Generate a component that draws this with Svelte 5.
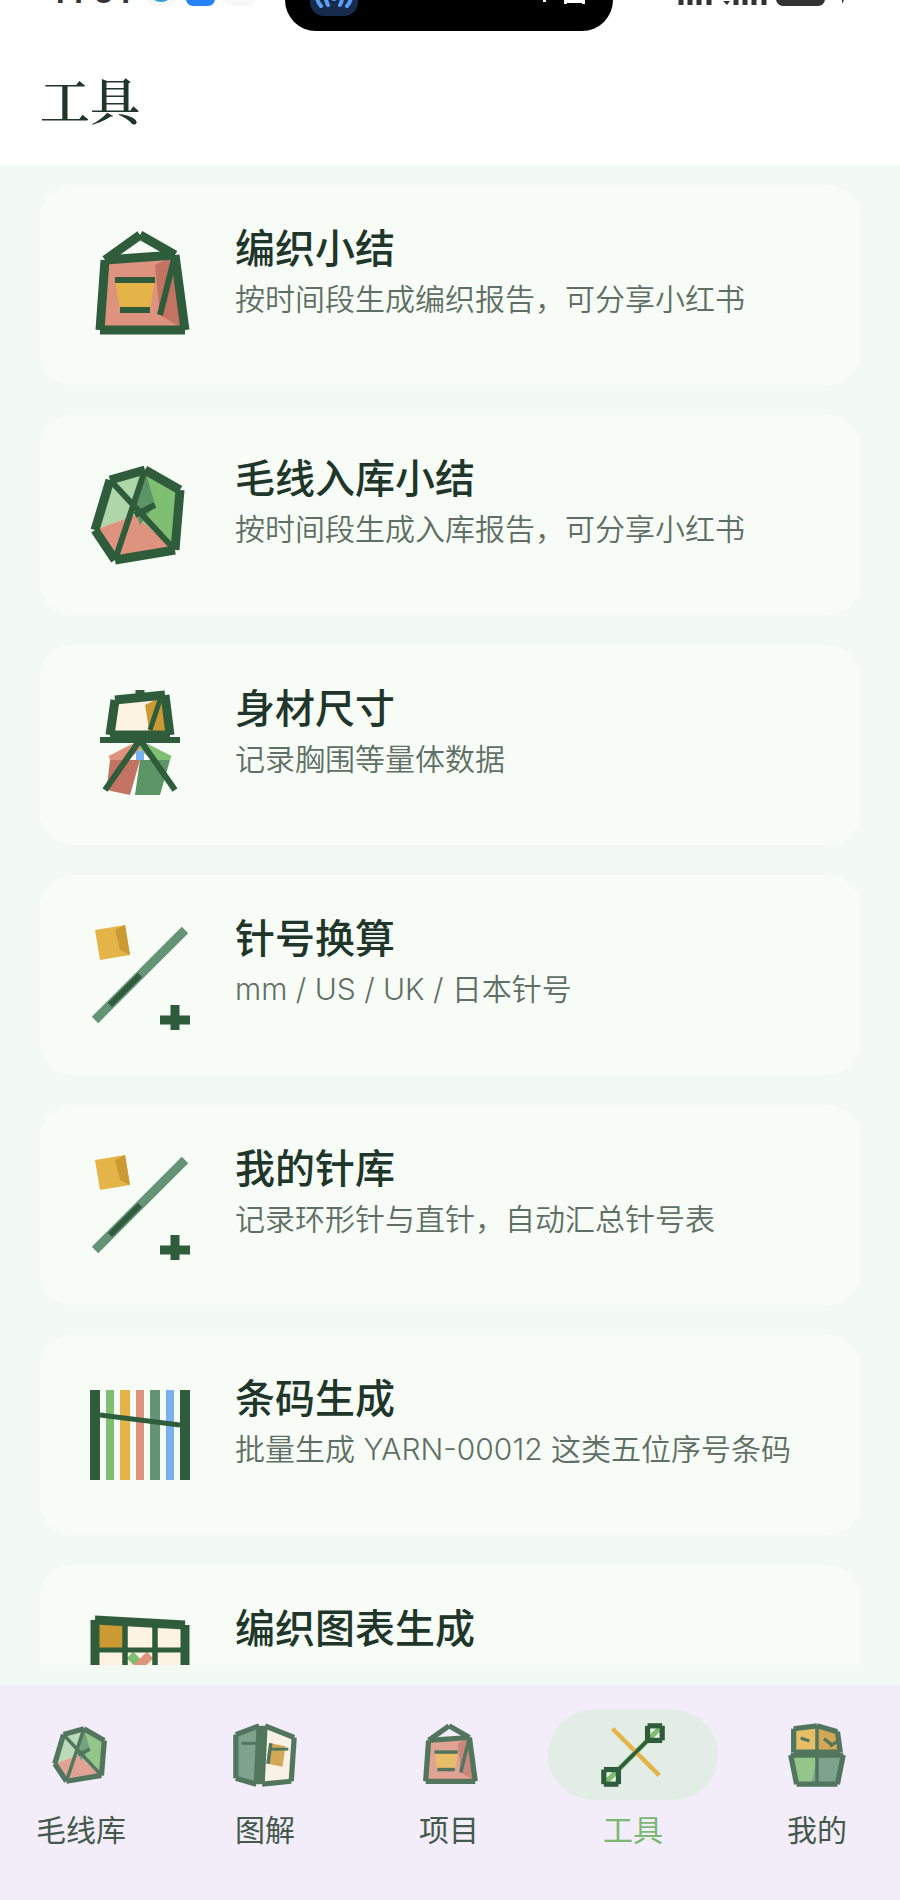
<script>
  const tools = [
    { icon: 'bag', title: '编织小结', desc: '按时间段生成编织报告，可分享小红书' },
    { icon: 'yarn', title: '毛线入库小结', desc: '按时间段生成入库报告，可分享小红书' },
    { icon: 'easel', title: '身材尺寸', desc: '记录胸围等量体数据' },
    { icon: 'needle', title: '针号换算', desc: 'mm / US / UK / 日本针号' },
    { icon: 'needle', title: '我的针库', desc: '记录环形针与直针，自动汇总针号表' },
    { icon: 'barcode', title: '条码生成', desc: '批量生成 YARN-00012 这类五位序号条码' },
    { icon: 'chart', title: '编织图表生成', desc: '' },
  ];

  const tabs = [
    { icon: 'yarn', label: '毛线库' },
    { icon: 'book', label: '图解' },
    { icon: 'bag', label: '项目' },
    { icon: 'tools', label: '工具' },
    { icon: 'basket', label: '我的' },
  ];

  let active = $state('工具');

  const dark = '#2f5d3c';
  const green = '#7fbf72';
  const moss = '#5c9465';
  const mint = '#afd6a9';
  const sage = '#659375';
  const pink = '#dd937d';
  const rust = '#c27362';
  const gold = '#e5b448';
  const ochre = '#cc9a33';
  const cream = '#fcf3e3';
  const blue = '#78b0f0';

  // every icon is drawn on a 24 x 24 grid, in paint order
  // f: filled polygon, s: single stroke [x1, y1, x2, y2]
  const f = (points, color) => ({ points, color });
  const s = (line, w = 1.8, color = dark) => ({ line, w, color });

  // closed outline made of separate butt-capped strokes
  function outline(pts, w = 1.8) {
    return pts.map((p, i) => s([...p, ...pts[(i + 1) % pts.length]], w));
  }

  const icons = {
    bag: [
      f('5,7 19,6 21,21 4,21', pink),
      f('15,8 19,6 21,21 16,18', rust),
      f('7,11 15,11 14,17 8,17', gold),
      ...outline([[5, 7], [19, 6], [21, 21], [4, 21]]),
      s([5, 7, 12, 2]),
      s([12, 2, 19, 6]),
      s([7, 11, 15, 11], 1.2),
      s([8, 17, 14, 17], 1.2),
      s([19, 6, 16, 18], 1.2),
    ],
    yarn: [
      f('6,5 13,3 11,12 3,15', mint),
      f('3,15 11,12 19,19 7,21', pink),
      f('13,3 20,7 19,19 11,12', green),
      f('13,3 15,10 12,14 11,11', moss),
      ...outline([[6, 5], [13, 3], [20, 7], [19, 19], [7, 21], [3, 15]]),
      s([6, 5, 19, 19], 1.2),
      s([13, 3, 7, 21], 1.2),
      s([11, 12, 15, 10], 1.2),
    ],
    easel: [
      f('9.5,15 12,13 14.5,15', '#fff'),
      f('12,11 5.7,14.2 6,15 9.5,15 12,13', pink),
      f('12,11 18.3,14.2 18,15 14.5,15 12,13', green),
      f('11.2,13.2 12.8,13.2 12.8,15 11.2,15', blue),
      f('6,15 12,15 10,22 5.3,21', rust),
      f('12,15 18,15 16,22 11,22', moss),
      f('7,3 17,2 18,10 6,10', cream),
      f('13,4 17,2 17,10 14,10', ochre),
      ...outline([[7, 3], [17, 2], [18, 10], [6, 10]]),
      s([12, 1, 12, 3]),
      s([4, 11, 20, 11], 1.2),
      s([16, 3, 14, 9], 1),
      s([12, 11, 5, 21], 1.2),
      s([12, 11, 19, 21], 1.2),
    ],
    needle: [
      f('3,3 9,2 10,8 4,9', gold),
      f('7,3 9,2 10,8 8,7', ochre),
      s([3, 21, 21, 3], 1.8, sage),
      s([6, 18, 12, 12], 1.2),
      s([16, 21, 22, 21]),
      s([19, 18, 19, 23]),
    ],
    barcode: [
      s([3, 3, 3, 21], 2),
      s([6, 3, 6, 21], 1.6, green),
      s([9, 3, 9, 21], 2, gold),
      s([12, 3, 12, 21], 1.6, pink),
      s([15, 3, 15, 21], 2, sage),
      s([18, 3, 18, 21], 1.6, blue),
      s([21, 3, 21, 21], 2),
      s([4, 8, 20, 10], 1),
    ],
    chart: [
      f('3,3 21,4 21,21 3,21', cream),
      f('3,3 9,3 9,9 3,9', ochre),
      s([10, 10, 12.6, 12.6], 1.8, green),
      s([14, 10, 11.4, 12.6], 1.8, pink),
      ...outline([[3, 3], [21, 4], [21, 21], [3, 21]]),
      s([9, 3, 9, 21], 1.1),
      s([15, 3, 15, 21], 1.1),
      s([3, 9, 21, 9], 1),
      s([3, 15, 21, 15], 1),
    ],
    book: [
      f('2,5 10,2 9,22 2,20', sage),
      f('12,2 22,6 21,21 11,22', cream),
      f('14,8 19,9 18,16 13,15', ochre),
      ...outline([[2, 5], [10, 2], [9, 22], [2, 20]]),
      ...outline([[12, 2], [22, 6], [21, 21], [11, 22]]),
      s([11, 2, 10, 22], 1),
      s([4, 8, 9, 8], 1),
      s([14, 8, 13, 15], 1.2),
      s([14, 10, 20, 10], 1),
    ],
    tools: [
      f('2,17 7,17 7,22 2,22', '#eef8ec'),
      f('17,2 22,2 22,7 17,7', '#eef8ec'),
      s([3, 21, 21, 3], 1.8, green),
      s([5, 3, 21, 19], 1.5, gold),
      s([7, 17, 17, 7], 1.2),
      ...outline([[2, 17], [7, 17], [7, 22], [2, 22]]),
      ...outline([[17, 2], [22, 2], [22, 7], [17, 7]]),
    ],
    basket: [
      f('4,3 12,2 12,11 4,11', gold),
      f('12,2 19,4 20,11 12,11', ochre),
      f('3,12 12,12 10,22 5,22', green),
      f('12,12 21,12 19,22 10,22', sage),
      ...outline([[4, 3], [12, 2], [19, 4], [20, 11], [4, 11]]),
      ...outline([[3, 12], [21, 12], [19, 22], [5, 22]]),
      s([12, 2, 12, 22], 1.2),
      s([6.4, 6.2, 9.4, 7.2], 1.1),
      s([14.4, 6.4, 17.4, 8.7], 1.1),
      s([16.5, 9, 19, 7.3], 1.1),
    ],
  };
</script>

{#snippet glyph(name)}
  <svg viewBox="0 0 24 24" aria-hidden="true">
    {#each icons[name] as shape}
      {#if shape.points}
        <polygon points={shape.points} fill={shape.color} />
      {:else}
        <line
          x1={shape.line[0]}
          y1={shape.line[1]}
          x2={shape.line[2]}
          y2={shape.line[3]}
          stroke={shape.color}
          stroke-width={shape.w}
        />
      {/if}
    {/each}
  </svg>
{/snippet}

<div class="screen">
  <header>
    <div class="status">
      <div class="side">
        <div class="clock"><span>11</span><span>34</span></div>
        <svg class="chips" viewBox="0 0 110 8" aria-hidden="true">
          <rect x="0" y="-24" width="30" height="30" rx="8" fill="#f8f8f8" />
          <circle cx="15" cy="-11" r="13" fill="#2d9fd0" />
          <rect x="40" y="-24" width="29" height="30" rx="7" fill="#2483fb" />
          <rect x="79" y="-24" width="30" height="30" rx="7" fill="#f8f8f8" />
        </svg>
      </div>
      <div class="island">
        <svg viewBox="0 0 328 31" aria-hidden="true">
          <rect x="25" y="-32" width="48" height="48" rx="14" fill="#172b4d" />
          <g fill="none" stroke="#5a9ff5" stroke-width="4" stroke-linecap="round">
            <path d="M32 -2Q33 3 36 6M41 -3Q41 2 43 5" />
            <path d="M66 -2Q65 3 62 6M57 -3Q57 2 55 5" />
          </g>
          <circle cx="49" cy="-2" r="3" fill="#5a9ff5" />
          <path d="M258 -4h3v6h-3zM279 -4h3v8h-3zM297 -4h3v8h-3zM279 0h21v3h-21z" fill="#fff" />
        </svg>
      </div>
      <div class="side end">
        <svg class="signals" viewBox="0 0 170 8" aria-hidden="true">
          <path
            d="M3 -4v9M12 -4v9M21 -4v9M31 -4v9M58 -4v9M67 -4v9M76 -4v9M86 -4v9"
            stroke="#333"
            stroke-width="5"
          />
          <path d="M45 1h7l-3 4z" fill="#333" />
          <rect x="98" y="-18" width="49" height="24" rx="7" fill="#333" />
          <path d="M164 -2h3l-3 6z" fill="#333" />
        </svg>
      </div>
    </div>
    <h1>工具</h1>
  </header>

  <main>
    <div class="list">
      {#each tools as tool}
        <a class="card" href="#{tool.icon}">
          {@render glyph(tool.icon)}
          <div class="text">
            <h2>{tool.title}</h2>
            <p>{tool.desc}</p>
          </div>
        </a>
      {/each}
    </div>
  </main>

  <nav>
    <div class="tabs">
      {#each tabs as tab}
        <button class:active={active === tab.label} onclick={() => (active = tab.label)}>
          <span class="pill">{@render glyph(tab.icon)}</span>
          {tab.label}
        </button>
      {/each}
    </div>
  </nav>
</div>

<style>
  :global(body) {
    margin: 0;
  }

  .screen {
    height: 100vh;
    display: flex;
    flex-direction: column;
    background: #f3faf4;
    color: #21362a;
    font-family: "Noto Sans CJK SC", "Noto Sans", sans-serif;
  }

  header {
    flex: none;
    background: #fff;
    padding-bottom: 32px;
  }

  .status {
    display: flex;
    justify-content: space-between;
    height: 31px;
    overflow: hidden;
  }

  .side {
    flex: 1;
    box-sizing: border-box;
    display: flex;
    align-items: flex-start;
    padding-left: 50px;
  }

  .side.end {
    justify-content: flex-end;
    padding: 0 52px 0 0;
  }

  .clock {
    flex: none;
    display: flex;
    gap: 8px;
    width: 96px;
    margin-top: -32px;
    font: 700 32px/48px Roboto, sans-serif;
    color: #333;
  }

  .chips {
    flex: none;
    width: 110px;
    height: 8px;
  }

  .signals {
    flex: none;
    width: 170px;
    height: 8px;
  }

  .island {
    flex: none;
    width: 328px;
    height: 31px;
    background: #000;
    border-radius: 0 0 40px 40px;
  }

  .island svg {
    display: block;
  }

  h1 {
    margin: 32px 40px 0;
    font: 600 50px/70px "Noto Serif CJK SC", "Noto Sans CJK SC", serif;
  }

  main {
    flex: 1;
    min-height: 0;
    padding: 20px 40px;
    display: flex;
  }

  .list {
    flex: 1;
    display: flex;
    flex-direction: column;
    gap: 30px;
    overflow: hidden;
  }

  .card {
    flex: none;
    display: flex;
    gap: 35px;
    padding: 40px;
    border-radius: 32px;
    background: #f7fcf6;
    color: inherit;
    text-decoration: none;
  }

  .card svg {
    flex: none;
    width: 120px;
    height: 120px;
  }

  h2 {
    margin: 0;
    font-size: 40px;
    font-weight: 500;
    line-height: 42px;
  }

  p {
    margin: 10px 0 0;
    font-family: Inter, "Noto Sans CJK SC", sans-serif;
    font-size: 30px;
    font-weight: 350;
    line-height: 44px;
    color: #5f6f65;
    white-space: nowrap;
  }

  nav {
    flex: none;
    overflow: hidden;
    background: #f2edf8;
    padding: 25px 0 50px;
  }

  .tabs {
    display: grid;
    grid-template-columns: repeat(5, 1fr);
    margin: 0 -9px 0 -11px;
  }

  button {
    display: flex;
    flex-direction: column;
    align-items: center;
    gap: 8px;
    padding: 0 0 2px;
    border: 0;
    background: none;
    color: #44594c;
    font: inherit;
    font-size: 30px;
    line-height: 40px;
    cursor: pointer;
  }

  .pill {
    width: 170px;
    height: 90px;
    display: grid;
    place-items: center;
    border-radius: 45px;
  }

  .pill svg {
    width: 70px;
    height: 70px;
    opacity: 0.82;
  }

  .active {
    color: #7ab873;
  }

  .active .pill {
    background: #e2ede5;
  }

  .active .pill svg {
    opacity: 1;
  }
</style>
